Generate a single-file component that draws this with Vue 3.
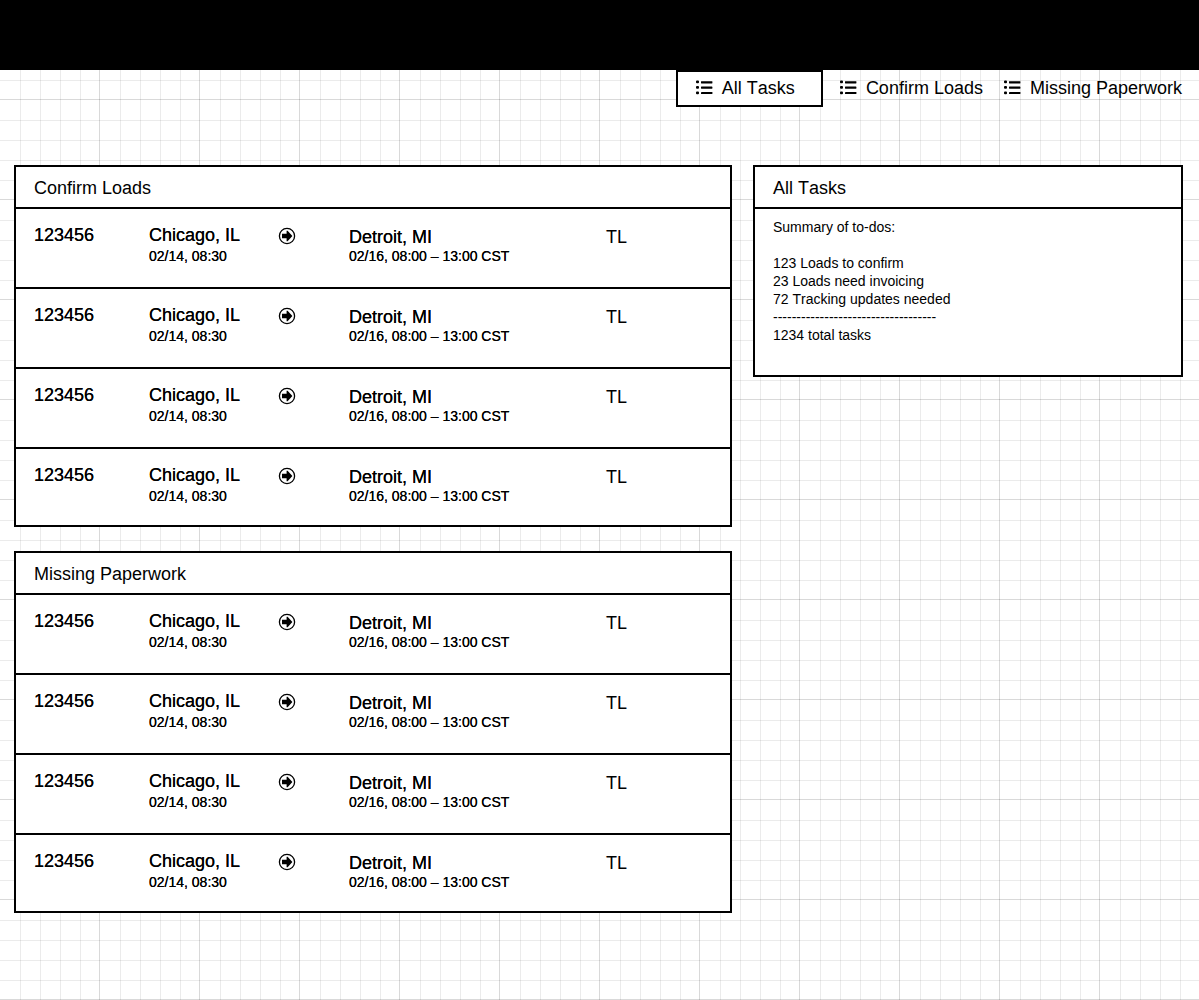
<script setup>
const tabs = [
  { label: 'All Tasks', active: true },
  { label: 'Confirm Loads', active: false },
  { label: 'Missing Paperwork', active: false }
]

const makeLoads = () =>
  Array.from({ length: 4 }, (_, i) => ({
    key: i,
    id: '123456',
    origin: 'Chicago, IL',
    pickup: '02/14, 08:30',
    destination: 'Detroit, MI',
    delivery: '02/16, 08:00 – 13:00 CST',
    mode: 'TL'
  }))

const panels = [
  { title: 'Confirm Loads', loads: makeLoads() },
  { title: 'Missing Paperwork', loads: makeLoads() }
]
</script>

<template>
  <div class="page">
    <header class="topbar"></header>
    <nav class="tabs">
      <a
        v-for="tab in tabs"
        :key="tab.label"
        href="#"
        class="tab"
        :class="{ active: tab.active }"
      >
        <svg class="list-icon" viewBox="0 0 16 16" aria-hidden="true">
          <rect x="0" y="0.5" width="3" height="2.8" rx="1" />
          <rect x="0" y="6" width="3" height="2.8" rx="1" />
          <rect x="0" y="11.4" width="3" height="2.8" rx="1" />
          <rect x="5" y="1.2" width="11.4" height="2.2" rx="0.4" />
          <rect x="5" y="6.5" width="11.4" height="2.2" rx="0.4" />
          <rect x="5" y="12" width="11.4" height="2.1" rx="0.4" />
        </svg>
        <span>{{ tab.label }}</span>
      </a>
    </nav>

    <main class="content">
      <div class="lists">
        <section v-for="panel in panels" :key="panel.title" class="panel">
          <h2 class="title">{{ panel.title }}</h2>
          <table class="loads">
            <colgroup>
              <col class="col-id" />
              <col class="col-origin" />
              <col class="col-arrow" />
              <col class="col-destination" />
              <col />
            </colgroup>
            <tbody>
              <tr v-for="load in panel.loads" :key="load.key">
                <td class="id">{{ load.id }}</td>
                <td>
                  <div class="city">{{ load.origin }}</div>
                  <div class="time">{{ load.pickup }}</div>
                </td>
                <td>
                  <svg class="arrow-icon" viewBox="0 0 18 18" aria-hidden="true">
                    <circle cx="9" cy="9" r="7.6" fill="none" stroke="#000" stroke-width="1.3" />
                    <path d="M4 6.8h4.6V3.8h1L14.4 9l-4.8 5.2h-1v-3H4z" />
                  </svg>
                </td>
                <td class="drop">
                  <div class="city">{{ load.destination }}</div>
                  <div class="time">{{ load.delivery }}</div>
                </td>
                <td class="mode">{{ load.mode }}</td>
              </tr>
            </tbody>
          </table>
        </section>
      </div>

      <aside class="panel">
        <h2 class="title">All Tasks</h2>
        <div class="summary">
          <p class="lead">Summary of to-dos:</p>
          <p>123 Loads to confirm</p>
          <p>23 Loads need invoicing</p>
          <p>72 Tracking updates needed</p>
          <p>-----------------------------------</p>
          <p>1234 total tasks</p>
        </div>
      </aside>
    </main>
  </div>
</template>

<style>
body {
  margin: 0;
}
</style>

<style scoped>
.page {
  --minor: rgba(0, 0, 0, 0.08);
  --major: rgba(0, 0, 0, 0.15);
  --stops: transparent 20px, var(--minor) 20px 21px, transparent 21px 40px,
    var(--minor) 40px 41px, transparent 41px 60px, var(--minor) 60px 61px,
    transparent 61px 80px, var(--minor) 80px 81px, transparent 81px 99px,
    var(--major) 99px 100px;
  box-sizing: border-box;
  min-height: 100vh;
  padding-bottom: 24px;
  background-color: #fff;
  background-image: linear-gradient(to right, var(--stops)),
    linear-gradient(to bottom, var(--stops));
  background-size: 100px 100px;
  color: #000;
  font-family: "Liberation Sans", Arial, sans-serif;
  font-size: 18px;
  font-kerning: none;
  line-height: 22px;
}

.topbar {
  height: 70px;
  background: #000;
}

.tabs {
  display: flex;
  justify-content: flex-end;
  height: 37px;
  padding-right: 17px;
}

.tab {
  display: flex;
  align-items: center;
  gap: 10px;
  box-sizing: border-box;
  height: 36px;
  margin-left: 21px;
  color: #000;
  text-decoration: none;
  white-space: nowrap;
}

.tab.active {
  height: 37px;
  padding: 0 26px 1px 18px;
  border: 2px solid #000;
  background: #fff;
}

.tab.active + .tab {
  margin-left: 17px;
}

.list-icon {
  width: 16px;
  height: 16px;
  overflow: visible;
}

.content {
  display: grid;
  grid-template-columns: 718fr 430fr;
  align-items: start;
  gap: 21px;
  padding: 58px 16px 0 14px;
}

.lists {
  display: flex;
  flex-direction: column;
  gap: 24px;
}

.panel {
  border: 2px solid #000;
  background: #fff;
}

.title {
  margin: 0;
  padding: 10px 18px 8px;
  border-bottom: 2px solid #000;
  font-size: 18px;
  font-weight: 400;
}

.loads {
  width: 100%;
  border-spacing: 0;
  table-layout: fixed;
}

.col-id {
  width: 133px;
}

.col-origin {
  width: 129px;
}

.col-arrow {
  width: 71px;
}

.col-destination {
  width: 257px;
}

.loads td {
  box-sizing: border-box;
  height: 80px;
  padding: 15px 0 0;
  border-bottom: 2px solid #000;
  vertical-align: top;
  text-shadow: 0 0 0 #000;
}

.loads tr:last-child td {
  height: 76px;
  border-bottom: 0;
}

.loads .id {
  padding-left: 18px;
}

.loads .drop {
  padding-top: 19px;
}

.loads .mode {
  padding-top: 17px;
  text-shadow: none;
}

.drop .city {
  line-height: 18px;
}

.time {
  font-size: 14px;
  line-height: 20px;
}

.arrow-icon {
  display: block;
  width: 18px;
  height: 18px;
  margin-top: 3px;
}

.summary {
  box-sizing: border-box;
  min-height: 166px;
  padding: 9px 18px;
  font-size: 14px;
  line-height: 18px;
}

.summary p {
  margin: 0;
}

.summary .lead {
  margin-bottom: 18px;
}
</style>
